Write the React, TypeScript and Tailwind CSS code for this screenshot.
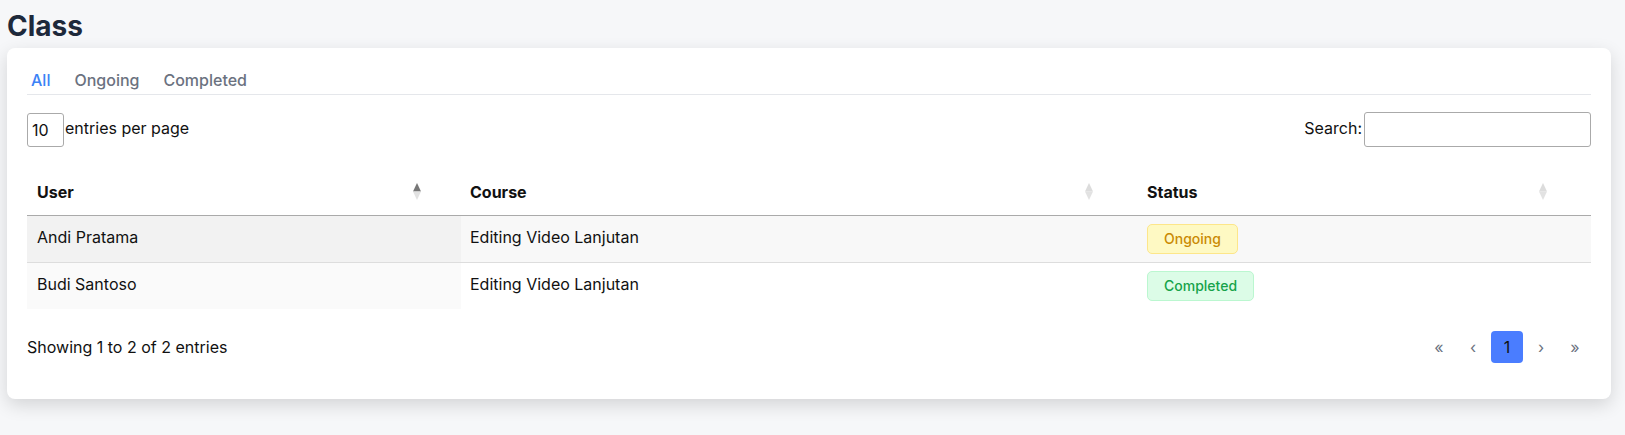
import { useState } from 'react';

type Row = { user: string; course: string; status: 'Ongoing' | 'Completed' };

const rows: Row[] = [
  { user: 'Andi Pratama', course: 'Editing Video Lanjutan', status: 'Ongoing' },
  { user: 'Budi Santoso', course: 'Editing Video Lanjutan', status: 'Completed' },
];

function SortIcon({ active }: { active?: boolean }) {
  return (
    <svg width="8" height="17" viewBox="0 0 8 17" className="shrink-0">
      <polygon points="4,0 8,8.5 0,8.5" fill={active ? '#777777' : '#dcdcdc'} />
      <polygon points="0,8.5 8,8.5 4,17" fill="#e2e2e2" />
    </svg>
  );
}

function StatusBadge({ status }: { status: Row['status'] }) {
  return status === 'Ongoing' ? (
    <span className="inline-flex h-[30px] items-center rounded-[5px] border border-[#fde68a] bg-[#fef9c3] px-4 text-[14px] font-medium text-[#ca8a04]">
      Ongoing
    </span>
  ) : (
    <span className="inline-flex h-[30px] items-center rounded-[5px] border border-[#bbf7d0] bg-[#dcfce7] px-4 text-[14px] font-medium text-[#16a34a]">
      Completed
    </span>
  );
}

export default function App() {
  const [tab, setTab] = useState('All');
  const tabs = ['All', 'Ongoing', 'Completed'];

  return (
    <div className="min-h-[435px] bg-[#f6f7f9] pl-[7px] pr-[14px] text-[#111111]" style={{ fontFamily: 'Inter, "Noto Sans", sans-serif' }}>
      <h1 className="pt-[9px] text-[28px] font-bold leading-[34px] text-[#1e293b]">Class</h1>
      <div className="mt-[5px] rounded-lg bg-white px-5 pb-9 pt-5 shadow-[0_6px_18px_rgba(0,0,0,0.14)]">
        <div className="flex gap-[24px] border-b border-[#e5e7eb] pl-[4px]">
          {tabs.map((t) => (
            <button
              key={t}
              onClick={() => setTab(t)}
              className={`pb-[2px] text-[16px] font-medium leading-6 ${tab === t ? 'text-[#3b82f6]' : 'text-[#6b7280]'}`}
            >
              {t}
            </button>
          ))}
        </div>

        <div className="mt-[17px] flex items-center justify-between">
          <div className="flex items-center text-[16px]">
            <div className="flex h-[34px] w-[37px] items-center rounded-[3px] border border-[#aaaaaa] pl-[4px]">10</div>
            <span className="ml-[1px] -translate-y-[2px]">entries per page</span>
          </div>
          <div className="flex items-center text-[16px]">
            <span className="mr-[2px] -translate-y-[2px]">Search:</span>
            <input className="h-[35px] w-[227px] rounded-[3px] border border-[#aaaaaa] px-2 outline-none" />
          </div>
        </div>

        <table className="mt-[22px] w-full border-collapse text-[16px]">
          <thead>
            <tr className="border-b border-[#aaaaaa]">
              <th className="h-[46px] w-[434px] pl-[10px] pr-[40px] text-left font-bold">
                <div className="flex items-center justify-between">
                  User
                  <SortIcon active />
                </div>
              </th>
              <th className="h-[46px] w-[676px] pl-[9px] pr-[44px] text-left font-bold">
                <div className="flex items-center justify-between">
                  Course
                  <SortIcon />
                </div>
              </th>
              <th className="h-[46px] pl-[10px] pr-[44px] text-left font-bold">
                <div className="flex items-center justify-between">
                  Status
                  <SortIcon />
                </div>
              </th>
            </tr>
          </thead>
          <tbody>
            {rows.map((r, i) => (
              <tr key={r.user} className={i === 0 ? 'border-b border-[#dddddd] bg-[#f8f8f8]' : 'bg-white'}>
                <td className={`h-[47px] pb-[4px] pl-[10px] ${i === 0 ? 'bg-[#f2f2f2]' : 'bg-[#fafafa]'}`}>{r.user}</td>
                <td className="h-[47px] pb-[4px] pl-[9px]">{r.course}</td>
                <td className="h-[47px] pl-[10px]">
                  <StatusBadge status={r.status} />
                </td>
              </tr>
            ))}
          </tbody>
        </table>

        <div className="mt-[22px] flex items-center justify-between">
          <span className="text-[16px]">Showing 1 to 2 of 2 entries</span>
          <div className="flex items-center gap-[2px] text-[16px] text-[#6b7280]">
            <span className="flex h-8 w-8 items-center justify-center">«</span>
            <span className="flex h-8 w-8 items-center justify-center">‹</span>
            <span className="flex h-8 w-8 items-center justify-center rounded-[4px] bg-[#4a7dff] text-[#111111]">1</span>
            <span className="flex h-8 w-8 items-center justify-center">›</span>
            <span className="flex h-8 w-8 items-center justify-center">»</span>
          </div>
        </div>
      </div>
    </div>
  );
}
